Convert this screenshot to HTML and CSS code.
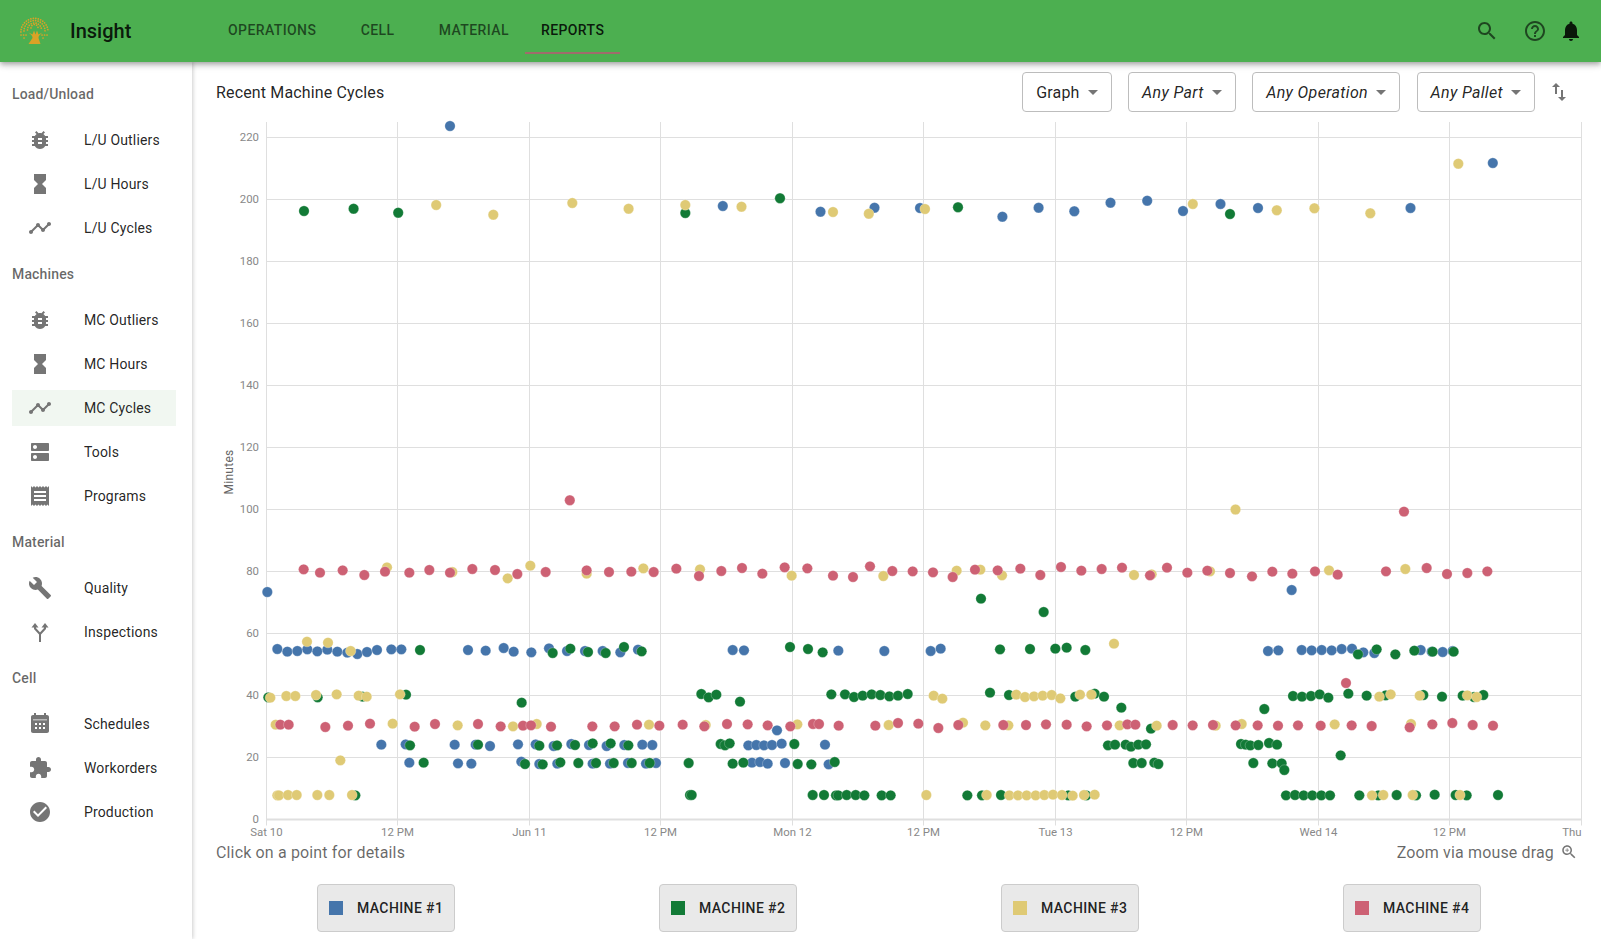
FILE: index.html
```html
<!DOCTYPE html>
<html>
<head>
    <title>Insight</title>
    <link rel="stylesheet" href="styles.css">
</head>
<body>
    <header class="topbar">
        <svg class="logo" viewBox="0 0 30 30">
            <path class="logo-trunk" d="M8.500 29h12l-2-6c-.2-2 1.500-3.500 4-5.500l-4 2-1.500-4-1.500 4-1.500-4-1.500 4-4-2c2.500 2 4.200 3.500 4 5.500z"/>
            <path class="logo-leaves" d="M.9 17A13.600 13.600 0 0 1 28.100 17"/>
            <path class="logo-leaves" d="M4 16A10.500 10.500 0 0 1 25 16"/>
            <path class="logo-leaves" d="M7.500 15A7 7 0 0 1 21.500 15"/>
            <path class="logo-leaves" d="M11 13A3.500 3.500 0 0 1 18 13"/>
            <path class="logo-leaves" d="M1 20h6M22 20h6M4 23h2M23 23h2"/>
        </svg>
        <div class="brand">Insight</div>
        <nav class="tabs">
            <a class="tab">Operations</a>
            <a class="tab">Cell</a>
            <a class="tab">Material</a>
            <a class="tab tab-active">Reports</a>
        </nav>
        <div class="topbar-icons">
            <span class="icon-btn faded">
                <svg class="icon" viewBox="0 0 24 24"><path d="M15.500 14h-.79l-.28-.27C15.410 12.590 16 11.110 16 9.500 16 5.910 13.090 3 9.500 3S3 5.910 3 9.500 5.910 16 9.500 16c1.610 0 3.090-.59 4.230-1.570l.27.28v.79l5 4.990L20.490 19l-4.990-5zm-6 0C7.010 14 5 11.990 5 9.500S7.010 5 9.500 5 14 7.010 14 9.500 11.990 14 9.500 14z"/></svg>
            </span>
            <span class="icon-btn faded">
                <svg class="icon" viewBox="0 0 24 24"><path d="M11 18h2v-2h-2v2zm1-16C6.480 2 2 6.480 2 12s4.480 10 10 10 10-4.480 10-10S17.520 2 12 2zm0 18c-4.410 0-8-3.590-8-8s3.590-8 8-8 8 3.590 8 8-3.590 8-8 8zm0-14c-2.210 0-4 1.790-4 4h2c0-1.100.9-2 2-2s2 .9 2 2c0 2-3 1.750-3 5h2c0-2.250 3-2.500 3-5 0-2.210-1.790-4-4-4z"/></svg>
            </span>
            <svg class="icon bell" viewBox="0 0 24 24"><path d="M12 22c1.100 0 2-.9 2-2h-4c0 1.100.89 2 2 2zm6-6v-5c0-3.070-1.640-5.640-4.500-6.320V4c0-.83-.67-1.500-1.500-1.500s-1.500.67-1.500 1.500v.68C7.630 5.360 6 7.920 6 11v5l-2 2v1h16v-1l-2-2z"/></svg>
        </div>
    </header>

    <div class="page">
        <aside class="sidebar">
            <div class="side-heading">Load/Unload</div>
            <a class="side-item">
                <svg class="icon" viewBox="0 0 24 24"><use href="#i-bug"/></svg>L/U Outliers
            </a>
            <a class="side-item">
                <svg class="icon" viewBox="0 0 24 24"><use href="#i-hourglass"/></svg>L/U Hours
            </a>
            <a class="side-item">
                <svg class="icon" viewBox="0 0 24 24"><use href="#i-timeline"/></svg>L/U Cycles
            </a>

            <div class="side-heading">Machines</div>
            <a class="side-item">
                <svg class="icon" viewBox="0 0 24 24"><use href="#i-bug"/></svg>MC Outliers
            </a>
            <a class="side-item">
                <svg class="icon" viewBox="0 0 24 24"><use href="#i-hourglass"/></svg>MC Hours
            </a>
            <a class="side-item side-item-active">
                <svg class="icon" viewBox="0 0 24 24"><use href="#i-timeline"/></svg>MC Cycles
            </a>
            <a class="side-item">
                <svg class="icon" viewBox="0 0 24 24"><path d="M20 13H4c-.55 0-1 .45-1 1v6c0 .55.45 1 1 1h16c.55 0 1-.45 1-1v-6c0-.55-.45-1-1-1zM7 19c-1.100 0-2-.9-2-2s.9-2 2-2 2 .9 2 2-.9 2-2 2zM20 3H4c-.55 0-1 .45-1 1v6c0 .55.45 1 1 1h16c.55 0 1-.45 1-1V4c0-.55-.45-1-1-1zM7 9c-1.100 0-2-.9-2-2s.9-2 2-2 2 .9 2 2-.9 2-2 2z"/></svg>Tools
            </a>
            <a class="side-item">
                <svg class="icon" viewBox="0 0 24 24"><path d="M18 17H6v-2h12v2zm0-4H6v-2h12v2zm0-4H6V7h12v2zM3 22l1.500-1.500L6 22l1.500-1.500L9 22l1.500-1.500L12 22l1.500-1.500L15 22l1.500-1.500L18 22l1.500-1.500L21 22V2l-1.500 1.500L18 2l-1.500 1.500L15 2l-1.500 1.500L12 2l-1.500 1.500L9 2 7.500 3.500 6 2 4.500 3.500 3 2v20z"/></svg>Programs
            </a>

            <div class="side-heading">Material</div>
            <a class="side-item">
                <svg class="icon" viewBox="0 0 24 24"><path d="M22.700 19l-9.100-9.100c.9-2.300.4-5-1.500-6.900-2-2-5-2.400-7.400-1.300L9 6 6 9 1.600 4.700C.4 7.100.9 10.100 2.900 12.100c1.900 1.900 4.600 2.400 6.900 1.500l9.100 9.100c.4.4 1 .4 1.400 0l2.300-2.300c.5-.4.5-1.100.1-1.400z"/></svg>Quality
            </a>
            <a class="side-item">
                <svg class="icon" viewBox="0 0 24 24"><path d="M7 3L3.500 7.500h7zM17 3l-3.500 4.500h7z"/><path class="icon-line" d="M7 6v2.500l5 5.500M17 6v2.500l-5 5.500M12 13.500V22"/></svg>Inspections
            </a>

            <div class="side-heading">Cell</div>
            <a class="side-item">
                <svg class="icon" viewBox="0 0 24 24"><path fill-rule="evenodd" d="M19 3h-1V1h-2v2H8V1H6v2H5c-1.110 0-2 .9-2 2v14c0 1.100.89 2 2 2h14c1.100 0 2-.9 2-2V5c0-1.100-.9-2-2-2zM5 7.500h14v.7H5zM7 11h2v2H7zM11 11h2v2h-2zM15 11h2v2h-2zM7 15h2v2H7zM11 15h2v2h-2zM15 15h2v2h-2z"/></svg>Schedules
            </a>
            <a class="side-item">
                <svg class="icon" viewBox="0 0 24 24"><path d="M20.500 11H19V7c0-1.100-.9-2-2-2h-4V3.500C13 2.120 11.880 1 10.500 1S8 2.120 8 3.500V5H4c-1.100 0-1.990.9-1.990 2v3.800H3.500c1.490 0 2.700 1.210 2.700 2.700s-1.210 2.700-2.700 2.700H2V20c0 1.100.9 2 2 2h3.800v-1.500c0-1.490 1.210-2.700 2.700-2.700 1.490 0 2.700 1.210 2.700 2.700V22H17c1.100 0 2-.9 2-2v-4h1.500c1.380 0 2.500-1.120 2.500-2.500S21.880 11 20.500 11z"/></svg>Workorders
            </a>
            <a class="side-item">
                <svg class="icon" viewBox="0 0 24 24"><path d="M12 2C6.480 2 2 6.480 2 12s4.480 10 10 10 10-4.480 10-10S17.520 2 12 2zm-2 15l-5-5 1.410-1.410L10 14.170l7.590-7.590L19 8l-9 9z"/></svg>Production
            </a>
        </aside>

        <main class="content">
            <div class="toolbar">
                <div class="toolbar-title">Recent Machine Cycles</div>
                <div class="select">Graph<span class="caret"></span></div>
                <div class="select select-any">Any Part<span class="caret"></span></div>
                <div class="select select-any">Any Operation<span class="caret"></span></div>
                <div class="select select-any">Any Pallet<span class="caret"></span></div>
                <span class="icon-btn">
                    <svg class="icon" viewBox="0 0 24 24"><path d="M9 3L5 6.990h3V14h2V6.990h3L9 3zm7 14.010V10h-2v7.010h-3L15 21l4-3.990h-3z"/></svg>
                </span>
            </div>

            <!-- chart is drawn by script.js, viewBox is in page pixels -->
            <svg id="chart" class="chart" viewBox="216 120 1366 722"></svg>

            <div class="hints">
                <span>Click on a point for details</span>
                <span class="hint-zoom">Zoom via mouse drag
                    <svg class="icon icon-small" viewBox="0 0 24 24"><path d="M15.500 14h-.79l-.28-.27C15.410 12.590 16 11.110 16 9.500 16 5.910 13.090 3 9.500 3S3 5.910 3 9.500 5.910 16 9.500 16c1.610 0 3.090-.59 4.230-1.570l.27.28v.79l5 4.990L20.490 19l-4.990-5zm-6 0C7.010 14 5 11.990 5 9.500S7.010 5 9.500 5 14 7.010 14 9.500 11.990 14 9.500 14zM12 10h-2v2H9v-2H7V9h2V7h1v2h2v1z"/></svg>
                </span>
            </div>

            <div class="legend">
                <div class="legend-btn"><span class="swatch swatch-1"></span>Machine #1</div>
                <div class="legend-btn"><span class="swatch swatch-2"></span>Machine #2</div>
                <div class="legend-btn"><span class="swatch swatch-3"></span>Machine #3</div>
                <div class="legend-btn"><span class="swatch swatch-4"></span>Machine #4</div>
            </div>
        </main>
    </div>

    <svg class="icon-defs">
        <defs>
            <path id="i-bug" d="M20 8h-2.810c-.45-.78-1.070-1.450-1.820-1.960L17 4.410 15.590 3l-2.170 2.170C12.960 5.060 12.490 5 12 5c-.49 0-.96.06-1.410.17L8.410 3 7 4.410l1.620 1.630C7.880 6.550 7.260 7.220 6.810 8H4v2h2.090c-.05.33-.09.66-.09 1v1H4v2h2v1c0 .34.04.67.09 1H4v2h2.810c1.040 1.790 2.970 3 5.190 3s4.150-1.210 5.190-3H20v-2h-2.090c.05-.33.09-.66.09-1v-1h2v-2h-2v-1c0-.34-.04-.67-.09-1H20V8zm-6 8h-4v-2h4v2zm0-4h-4v-2h4v2z"/>
            <path id="i-hourglass" d="M6 2v6h.01L6 8.010 10 12l-4 4 .01.01H6V22h12v-5.990h-.01L18 16l-4-4 4-3.990-.01-.01H18V2H6z"/>
            <path id="i-timeline" d="M23 8c0 1.100-.9 2-2 2-.18 0-.35-.02-.51-.07l-3.560 3.550c.05.16.07.34.07.52 0 1.100-.9 2-2 2s-2-.9-2-2c0-.18.02-.36.07-.52l-2.550-2.550c-.16.05-.34.07-.52.07s-.36-.02-.52-.07l-4.550 4.560c.05.16.07.33.07.51 0 1.100-.9 2-2 2s-2-.9-2-2 .9-2 2-2c.18 0 .35.02.51.07l4.560-4.550C8.020 9.360 8 9.180 8 9c0-1.100.9-2 2-2s2 .9 2 2c0 .18-.02.36-.07.52l2.550 2.550c.16-.05.34-.07.52-.07s.36.02.52.07l3.550-3.560C19.020 8.350 19 8.180 19 8c0-1.100.9-2 2-2s2 .9 2 2z"/>
        </defs>
    </svg>

    <script src="script.js"></script>
</body>
</html>
```

FILE: styles.css
```css
* {
    box-sizing: border-box;
}

body {
    margin: 0;
    height: 939px;
    overflow: hidden;
    background: white;
    color: rgba(0, 0, 0, 0.87);
    font-family: Roboto, sans-serif;
    font-size: 14px;
    letter-spacing: 0.15px;
}

.icon {
    display: block;
    width: 24px;
    height: 24px;
    fill: #757575;
    flex: none;
}

.icon-line {
    fill: none;
    stroke: #757575;
    stroke-width: 2;
}

.icon-small {
    width: 18px;
    height: 18px;
}

.icon-defs {
    display: none;
}

.icon-btn {
    display: block;
    padding: 12px;
}

/* top bar */
.topbar {
    position: relative;
    z-index: 2;
    display: flex;
    align-items: center;
    height: 62px;
    padding: 0 18px 0 20px;
    background-color: #4caf50;
    box-shadow: 0 2px 4px -1px rgba(0, 0, 0, 0.2), 0 4px 5px 0 rgba(0, 0, 0, 0.14), 0 1px 10px 0 rgba(0, 0, 0, 0.12);
}

.logo {
    width: 30px;
    height: 30px;
    margin-top: -3px;
    flex: none;
}

.logo-trunk {
    fill: #daa226;
}

.logo-leaves {
    fill: none;
    stroke: #daa226;
    stroke-width: 1.700;
    stroke-linecap: round;
    stroke-dasharray: 0.1 2.400;
}

.brand {
    width: 142px;
    margin-left: 20px;
    font-size: 20px;
    font-weight: 500;
    letter-spacing: 0;
    color: rgba(0, 0, 0, 0.87);
}

.tabs {
    display: flex;
    align-self: stretch;
    flex: 1;
}

.tab {
    display: flex;
    align-items: center;
    min-width: 90.500px;
    padding: 0 16px;
    justify-content: center;
    font-weight: 500;
    text-transform: uppercase;
    letter-spacing: 0.4px;
    color: rgba(0, 0, 0, 0.6);
    border-bottom: 2px solid transparent;
    margin-bottom: 8px;
    padding-top: 8px;
}

.tab-active {
    color: rgba(0, 0, 0, 0.87);
    border-bottom-color: #a06c6c;
}

.topbar-icons {
    display: flex;
    align-items: center;
}

.faded .icon {
    fill: rgba(0, 0, 0, 0.6);
}

.bell {
    fill: rgba(0, 0, 0, 0.87);
}

/* sidebar */
.page {
    display: flex;
    height: 877px;
}

.sidebar {
    position: relative;
    z-index: 1;
    display: flex;
    flex-direction: column;
    width: 192px;
    flex: none;
    padding-top: 8px;
    background: white;
    box-shadow: 1px 0 4px rgba(0, 0, 0, 0.2);
}

.side-heading {
    height: 48px;
    flex: none;
    padding-left: 12px;
    line-height: 48px;
    font-weight: 500;
    color: rgba(0, 0, 0, 0.6);
}

.side-item {
    display: flex;
    align-items: center;
    height: 36px;
    flex: none;
    margin: 4px 16px 4px 12px;
    padding-left: 16px;
}

.side-item .icon {
    margin-right: 32px;
}

.side-item-active {
    background-color: #f1f7f1;
}

/* main area */
.content {
    flex: 1;
    min-width: 0;
    padding: 10px 19px 0 24px;
}

.toolbar {
    display: flex;
    align-items: center;
    height: 40px;
    margin-right: -1px;
}

.toolbar-title {
    flex: 1;
    font-size: 16px;
}

.select {
    display: flex;
    align-items: center;
    height: 40px;
    margin-right: 16.500px;
    padding: 0 13px;
    border: 1px solid #bdbdbd;
    border-radius: 4px;
    font-size: 16px;
}

.select-any {
    font-style: italic;
    letter-spacing: 0.35px;
}

.select:nth-last-child(2) {
    margin-right: 0;
}

.caret {
    width: 0;
    height: 0;
    margin-left: 8px;
    border-left: 5px solid transparent;
    border-right: 5px solid transparent;
    border-top: 5px solid #757575;
}

.chart {
    display: block;
    width: 1366px;
    height: 722px;
    margin-top: 8px;
    overflow: hidden;
}

.grid-line {
    stroke: #dfdfdf;
    stroke-width: 1;
}

.axis-line {
    stroke: #dfdfdf;
    stroke-width: 2;
}

.tick-label {
    font-family: Roboto, sans-serif;
    font-size: 11.400px;
    letter-spacing: 0;
    fill: #888;
}

.axis-title {
    font-family: Roboto, sans-serif;
    font-size: 12px;
    letter-spacing: 0.3px;
    fill: #666;
}

.hints {
    display: flex;
    justify-content: space-between;
    align-items: center;
    height: 20px;
    font-size: 16px;
    color: rgba(0, 0, 0, 0.6);
}

.hint-zoom {
    display: flex;
    align-items: center;
    gap: 6px;
    margin-right: 4px;
}

.legend {
    display: flex;
    justify-content: space-around;
    margin: 22px -1px 0 -1px;
}

.legend-btn {
    display: flex;
    align-items: center;
    width: 138px;
    height: 48px;
    padding-left: 11px;
    border: 1px solid #ccc;
    border-radius: 4px;
    background-color: #e9e9e9;
    font-weight: 500;
    text-transform: uppercase;
    letter-spacing: 0.4px;
}

.swatch {
    width: 14px;
    height: 14px;
    margin-right: 14px;
}

.swatch-1 {
    background-color: #4575ab;
}

.swatch-2 {
    background-color: #127a36;
}

.swatch-3 {
    background-color: #dfca75;
}

.swatch-4 {
    background-color: #cd6174;
}
```

FILE: script.js
```js
// Cycle samples for each machine, drawn in this order so later machines sit on top.
// Each block holds points measured from the plot at a given origin and scale.
var colors = ["#4575ab", "#127a36", "#dfca75", "#cd6174"];

var blocks = [
    { x: 0, y: 0, scale: 1, machines: [
        [[450,126],[722.8,206],[820.5,211.7],[874.5,207.7],[920,208],[1002.4,216.7],[1038.6,207.7],[1074.3,211.3],[1110.5,202.7],[1147.2,200.7],[1183,211],[1220.5,204],[1258,208],[1410.5,208],[1492.8,163]],
        [[304,211],[353.6,208.7],[398.2,212.7],[685.3,213],[780,198.3],[958,207.3],[1230,214]],
        [[436.2,205],[493.3,214.7],[572.3,203],[628.6,208.7],[685.3,205],[741.5,206.7],[833,212],[868.8,213.7],[925,209],[1192.8,204],[1276.8,210.3],[1314.4,208.3],[1370.3,213.3],[1458.3,163.7],[1235.5,509.5]],
        [[569.8,500.3],[1404,511.6]]
    ]},
    { x: 200, y: 530, scale: 3, machines: [
        [[202,186],[232,357],[262,365],[292,363],[322,358],[352,364],[382,359],[412,365],[442,368],[472,372],[501,366],[531,360],[574,358],[604,358],[804,360],[857,362],[911,354],[941,365],[994,367],[1047,355],[1101,363],[1155,363],[1208,363],[1261,367],[1314,359],[544,644],[617,643],[764,644],[827,644],[870,648],[954,643],[1007,643],[1061,648],[1114,642],[1167,645],[1220,648],[1273,645],[1327,644],[1357,645],[628,698],[774,700],[814,701],[964,695],[1018,702],[1072,701],[1178,701],[1230,701],[1284,699],[1338,701],[1368,699]],
        [[660,360],[1058,369],[1111,356],[1164,366],[1217,369],[1272,351],[1325,364],[205,502],[353,502],[488,500],[618,494],[965,518],[630,646],[834,644],[1018,647],[1071,646],[1125,645],[1178,640],[1232,640],[1285,646],[671,698],[975,702],[1028,703],[1081,697],[1135,699],[1188,699],[1241,699],[1295,699],[1349,699],[466,796]],
        [[321,335],[384,338],[452,363],[211,503],[259,498],[286,498],[348,495],[410,493],[476,497],[500,500],[600,493],[227,584],[578,581],[773,586],[939,589],[1010,582],[1347,584],[421,691],[232,796],[237,796],[264,795],[290,795],[352,795],[388,795],[456,795],[561,112],[757,126],[923,145],[991,107],[1160,131],[1330,115]],
        [[311,118],[360,128],[428,121],[493,135],[555,125],[628,128],[688,120],[750,128],[817,117],[885,120],[952,132],[1037,126],[1160,121],[1227,126],[1294,125],[1361,126],[1429,116],[241,584],[266,584],[376,591],[444,587],[510,581],[644,590],[705,582],[834,582],[902,589],[969,587],[993,586],[1053,590],[1177,589],[1244,589],[1311,584],[1378,587]]
    ]},
    { x: 680, y: 530, scale: 3, machines: [
        [[158,360],[192,361],[475,362],[613,363],[752,363],[782,356],[205,646],[229,645],[252,646],[276,645],[305,641],[435,644],[291,601],[216,698],[240,696],[263,701],[315,699],[446,703]],
        [[330,351],[384,357],[428,367],[960,358],[1050,357],[1126,356],[1160,353],[1216,360],[903,206],[1091,246],[64,492],[86,502],[109,494],[180,515],[454,493],[495,493],[522,501],[548,497],[575,493],[601,495],[628,499],[654,497],[683,492],[930,488],[987,495],[1186,500],[1244,491],[1272,500],[1324,533],[122,642],[135,646],[149,640],[343,642],[1284,646],[1305,644],[1337,644],[26,699],[158,701],[190,698],[353,702],[394,703],[464,696],[30,795],[35,795],[398,795],[432,795],[468,796],[475,796],[500,795],[527,795],[553,796],[605,796],[632,796],[862,796],[906,796],[963,795],[1165,796],[1219,796]],
        [[60,118],[335,137],[610,138],[830,122],[901,119],[966,136],[77,585],[352,583],[626,585],[849,578],[916,586],[985,586],[1319,586],[761,497],[787,506],[1009,494],[1035,501],[1062,499],[1088,497],[1115,495],[1141,505],[1200,494],[1234,494],[1302,341],[739,795],[920,795],[988,796],[1014,796],[1040,796],[1067,796],[1093,795],[1119,794],[1146,795],[1178,797],[1212,795],[1244,794]],
        [[57,138],[124,123],[186,114],[247,131],[314,112],[382,115],[459,137],[519,141],[570,109],[637,123],[698,124],[759,127],[818,141],[885,119],[953,121],[1021,116],[1081,135],[1143,111],[1204,122],[1265,117],[1326,113],[8,584],[73,589],[141,582],[203,583],[263,586],[331,589],[399,582],[417,582],[476,587],[586,587],[654,579],[715,581],[775,594],[835,585],[970,585],[1038,585],[1098,583],[1160,584],[1220,589],[1281,586],[1342,583]]
    ]},
    { x: 1130, y: 530, scale: 3, machines: [
        [[485,180],[414,363],[445,361],[515,360],[545,361],[575,360],[605,361],[635,357],[666,356],[700,367],[733,369],[872,360],[905,365],[938,366],[968,363]],
        [[684,373],[740,358],[796,373],[853,362],[908,365],[971,365],[403,537],[489,498],[516,500],[543,498],[569,493],[595,503],[655,491],[710,497],[767,496],[880,495],[936,500],[998,497],[1032,501],[1060,495],[63,596],[3,650],[25,644],[48,643],[333,642],[347,644],[361,646],[385,645],[417,639],[441,644],[632,676],[10,699],[35,699],[73,698],[85,702],[370,699],[427,700],[455,700],[463,720],[468,796],[495,795],[521,796],[547,796],[574,796],[600,796],[688,796],[745,796],[800,795],[858,796],[914,794],[977,795],[1010,796],[1104,795]],
        [[12,135],[65,133],[240,124],[597,121],[826,117],[80,587],[257,587],[335,582],[614,583],[843,582],[748,500],[782,493],[869,497],[1012,496],[1040,501],[726,796],[760,795],[848,795],[990,795]],
        [[60,136],[111,113],[172,128],[232,122],[300,129],[366,139],[427,125],[487,131],[555,124],[623,134],[768,124],[890,114],[951,132],[1012,129],[1072,124],[16,584],[128,585],[188,586],[249,585],[317,586],[383,586],[444,587],[504,586],[572,587],[665,586],[725,588],[839,592],[907,583],[967,579],[1028,585],[1089,587],[648,459]]
    ]}
];

var plot = { left: 266.5, right: 1581.5, top: 122, bottom: 819.5 };
var xTicks = [
    [266.5, "Sat 10"], [397.5, "12 PM"], [529.5, "Jun 11"], [660.5, "12 PM"], [792.5, "Mon 12"],
    [923.5, "12 PM"], [1055.5, "Tue 13"], [1186.5, "12 PM"], [1318.5, "Wed 14"], [1449.5, "12 PM"], [1581.5, "Thu", "end"]
];

var svg = document.getElementById("chart");

function add(name, attrs, text) {
    var el = document.createElementNS("http://www.w3.org/2000/svg", name);
    for (var key in attrs) {
        el.setAttribute(key, attrs[key]);
    }
    if (text) {
        el.textContent = text;
    }
    svg.appendChild(el);
}

// horizontal grid, one line every 20 minutes
for (var m = 0; m <= 220; m += 20) {
    var y = Math.floor(plot.bottom - m * 3.1) + 0.5;
    if (m > 0) {
        add("line", { x1: plot.left, x2: plot.right, y1: y, y2: y, "class": "grid-line" });
    }
    add("text", { x: 259, y: y + 3, "text-anchor": "end", "class": "tick-label" }, String(m));
}

// vertical grid and time labels
xTicks.forEach(function (tick) {
    add("line", { x1: tick[0], x2: tick[0], y1: plot.top, y2: plot.bottom + 6, "class": "grid-line" });
    add("text", { x: tick[0], y: 836, "text-anchor": tick[2] || "middle", "class": "tick-label" }, tick[1]);
});
add("line", { x1: plot.left, x2: plot.right, y1: plot.bottom, y2: plot.bottom, "class": "axis-line" });

add("text", { transform: "translate(233 472) rotate(-90)", "text-anchor": "middle", "class": "axis-title" }, "Minutes");

colors.forEach(function (color, machine) {
    blocks.forEach(function (block) {
        block.machines[machine].forEach(function (p) {
            add("circle", {
                cx: block.x + p[0] / block.scale,
                cy: block.y + p[1] / block.scale,
                r: 5.2,
                fill: color,
                stroke: "white",
                "stroke-opacity": 0.5,
                "stroke-width": 0.5
            });
        });
    });
});
```
